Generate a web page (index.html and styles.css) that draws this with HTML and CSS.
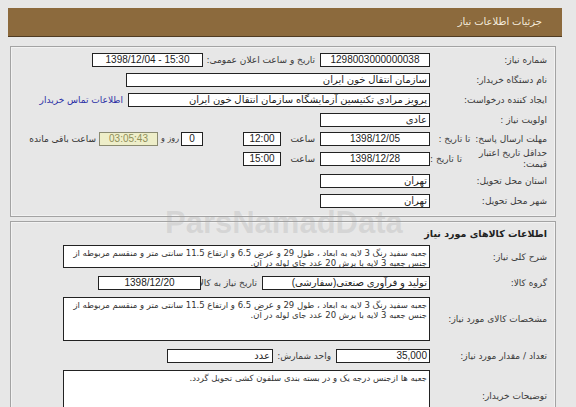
FILE: index.html
```html
<!DOCTYPE html>
<html lang="fa" dir="rtl">
<head>
    <meta charset="UTF-8">
    <title>جزئیات اطلاعات نیاز</title>
    <link rel="stylesheet" href="styles.css">
</head>
<body>
    <div class="page">
        <div class="title-bar">جزئیات اطلاعات نیاز</div>

        <!-- اطلاعات کلی نیاز -->
        <div class="panel panel-info">
            <div class="row">
                <div class="lbl">شماره نیاز:</div>
                <div class="box w-110 center">1298003000000038</div>
                <div class="lbl-mid w-107">تاریخ و ساعت اعلان عمومی:</div>
                <div class="box w-111 center ltr">1398/12/04 - 15:30</div>
            </div>
            <div class="row">
                <div class="lbl">نام دستگاه خریدار:</div>
                <div class="box w-304">سازمان انتقال خون ایران</div>
            </div>
            <div class="row">
                <div class="lbl">ایجاد کننده درخواست:</div>
                <div class="box w-302">پرویز مرادی تکنیسین آزمایشگاه سازمان انتقال خون ایران</div>
                <a class="contact" href="#">اطلاعات تماس خریدار</a>
            </div>
            <div class="row">
                <div class="lbl">اولویت نیاز :</div>
                <div class="box w-110">عادی</div>
            </div>
            <div class="row row-deadline">
                <div class="lbl">مهلت ارسال پاسخ: <span class="until">تا تاریخ :</span></div>
                <div class="box w-110 center">1398/12/05</div>
                <div class="lbl-hour">ساعت</div>
                <div class="box w-38 center">12:00</div>
                <div class="box w-22 center day">0</div>
                <div class="lbl-day">روز و</div>
                <div class="box remain center">03:05:43</div>
                <div class="lbl-remain">ساعت باقی مانده</div>
            </div>
            <div class="row row-price">
                <div class="lbl lbl-split">
                    <span class="two-line">حداقل تاریخ اعتبار<br>قیمت:</span>
                    <span class="until2">تا تاریخ :</span>
                </div>
                <div class="box w-110 center">1398/12/28</div>
                <div class="lbl-hour">ساعت</div>
                <div class="box w-38 center">15:00</div>
            </div>
            <div class="row row-city">
                <div class="lbl">استان محل تحویل:</div>
                <div class="box w-110">تهران</div>
            </div>
            <div class="row">
                <div class="lbl">شهر محل تحویل:</div>
                <div class="box w-110">تهران</div>
            </div>
        </div>

        <!-- کالاها -->
        <div class="panel panel-goods">
            <div class="section-title">اطلاعات کالاهای مورد نیاز</div>
            <div class="row row-text">
                <div class="lbl">شرح کلی نیاز:</div>
                <div class="memo memo-short">جعبه سفید رنگ 3 لایه به ابعاد ، طول 29 و عرض 6.5 و ارتفاع 11.5 سانتی متر و منقسم مربوطه از<br>جنس جعبه 3 لایه با برش 20 عدد جای لوله در آن.</div>
            </div>
            <div class="row row-group">
                <div class="lbl">گروه کالا:</div>
                <div class="box w-168">تولید و فرآوری صنعتی(سفارشی)</div>
                <div class="lbl-mid w-51">تاریخ نیاز به کالا:</div>
                <div class="box w-103 center">1398/12/20</div>
            </div>
            <div class="row row-text">
                <div class="lbl">مشخصات کالای مورد نیاز:</div>
                <div class="memo memo-mid">جعبه سفید رنگ 3 لایه به ابعاد ، طول 29 و عرض 6.5 و ارتفاع 11.5 سانتی متر و منقسم مربوطه از<br>جنس جعبه 3 لایه با برش 20 عدد جای لوله در آن.</div>
            </div>
            <div class="row row-count">
                <div class="lbl">تعداد / مقدار مورد نیاز:</div>
                <div class="box w-94">35,000</div>
                <div class="lbl-mid w-53">واحد شمارش:</div>
                <div class="box w-106">عدد</div>
            </div>
            <div class="row row-text">
                <div class="lbl">توضیحات خریدار:</div>
                <div class="memo memo-tall">جعبه ها ازجنس درجه یک و در بسته بندی سلفون کشی تحویل گردد.</div>
            </div>
        </div>

        <div class="watermark">ParsNamadData</div>
    </div>
</body>
</html>
```

FILE: styles.css
```css
/* Global */
* {
    box-sizing: border-box;
    margin: 0;
    padding: 0;
}

body {
    background-color: #e7e7e7;
    font-family: "Liberation Sans", "DejaVu Sans", sans-serif;
    font-size: 10px;
    color: #333;
    overflow: hidden;
}

.page {
    position: relative;
    padding: 8px 14px 0 8px;
}

/* Title bar */
.title-bar {
    height: 29px;
    line-height: 28px;
    padding-right: 20px;
    background-color: #8c6a3d;
    border-bottom: 1px solid #4f3b22;
    color: #f4ecdc;
    font-size: 10px;
}

/* Panels */
.panel {
    margin: 9px 6px 0 2px;
    border: 1px solid #a3a3a3;
    box-shadow: inset 0 0 0 1px #f2f2f2;
    padding-right: 8px;
}

.panel-info {
    padding-top: 3px;
    padding-bottom: 5px;
}

.panel-goods {
    margin-top: 4px;
    height: 200px;
}

/* Rows */
.row {
    display: flex;
    align-items: center;
    height: 20px;
}

.row-deadline {
    height: 17px;
}

.row-price {
    height: 23px;
}

.row-city {
    height: 21px;
}

.lbl {
    width: 117px;
    flex-shrink: 0;
    font-family: "DejaVu Sans", sans-serif;
    font-size: 9px;
    color: #3a3a3a;
    white-space: nowrap;
}

.lbl-mid {
    margin-right: 5px;
    margin-left: 5px;
    font-family: "DejaVu Sans", sans-serif;
    font-size: 9px;
    color: #3a3a3a;
    white-space: nowrap;
}

.until {
    margin-right: 2px;
}

.lbl-split {
    display: flex;
    align-items: center;
}

.two-line {
    width: 70px;
    line-height: 11px;
}

.until2 {
    margin-right: 16px;
}

.lbl-hour {
    width: 25px;
    margin-right: 5px;
    margin-left: 9px;
    font-family: "DejaVu Sans", sans-serif;
    font-size: 9px;
}

.lbl-day {
    width: 18px;
    margin-right: 2px;
    margin-left: 3px;
    font-family: "DejaVu Sans", sans-serif;
    font-size: 8px;
}

.lbl-remain {
    margin-right: 3px;
    font-family: "DejaVu Sans", sans-serif;
    font-size: 9px;
    white-space: nowrap;
}

/* Input boxes */
.box {
    height: 14px;
    line-height: 12px;
    padding: 0 2px;
    background-color: #fff;
    border: 1px solid #222;
    color: #222;
    font-size: 10px;
    white-space: nowrap;
    overflow: hidden;
    flex-shrink: 0;
}

.box.center {
    text-align: center;
}

.box.ltr {
    direction: ltr;
}

.w-22 { width: 22px; }
.w-38 { width: 38px; }
.w-94 { width: 94px; }
.w-103 { width: 103px; }
.w-106 { width: 106px; }
.w-110 { width: 110px; }
.w-111 { width: 111px; }
.w-168 { width: 168px; }
.w-302 { width: 302px; }
.w-304 { width: 304px; }
.w-51 { width: 51px; }
.w-53 { width: 53px; }
.w-107 { width: 107px; }

.day {
    margin-right: 40px;
}

.remain {
    width: 59px;
    background-color: #eeeec9;
    border-color: #8a8a70;
    color: #8f8f5a;
}

.contact {
    margin-right: 5px;
    font-family: "DejaVu Sans", sans-serif;
    font-size: 9px;
    color: #2b2fa5;
    text-decoration: none;
    white-space: nowrap;
}

/* Goods section */
.section-title {
    height: 23px;
    line-height: 24px;
    font-family: "DejaVu Sans", sans-serif;
    font-size: 9.5px;
    font-weight: bold;
    color: #222;
}

.panel-goods .row {
    margin-bottom: 8px;
}

.row-text {
    height: auto;
}

.row-group,
.row-count {
    height: 13px;
}

.memo {
    width: 367px;
    padding: 3px 2px 0;
    background-color: #fff;
    border: 1px solid #222;
    font-family: "DejaVu Sans", sans-serif;
    font-size: 8.5px;
    line-height: 9.5px;
    color: #333;
    white-space: nowrap;
    overflow: hidden;
}

.memo-short {
    height: 23px;
}

.memo-mid {
    height: 44px;
}

.memo-tall {
    height: 52px;
}

/* Watermark over the page */
.watermark {
    position: absolute;
    top: 207px;
    left: 165px;
    font-family: "Liberation Sans", sans-serif;
    font-size: 31px;
    font-weight: bold;
    line-height: 31px;
    color: rgba(160, 160, 160, 0.25);
    direction: ltr;
    pointer-events: none;
}
```
